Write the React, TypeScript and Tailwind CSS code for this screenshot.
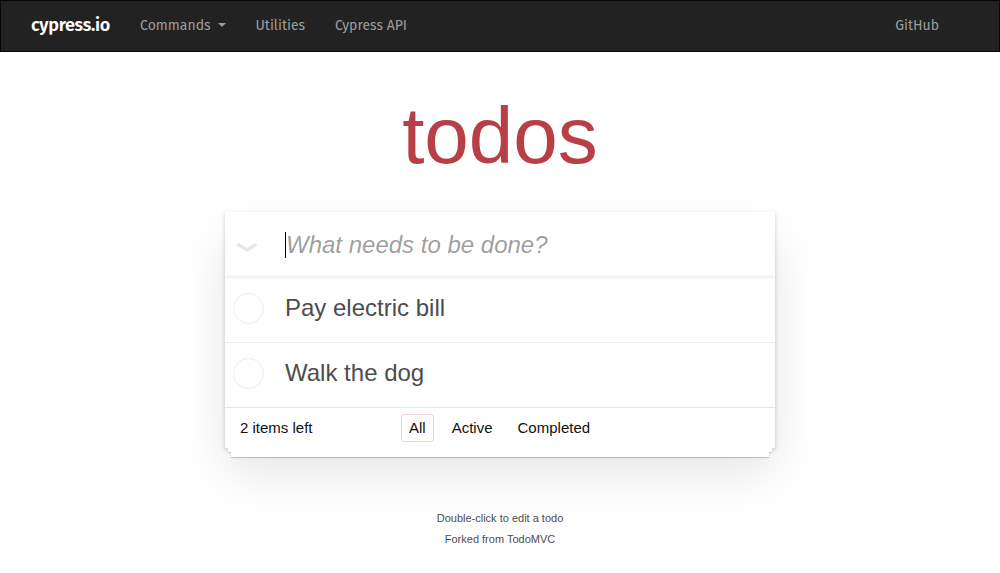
import React from "react";

type Todo = { id: number; title: string };

const todos: Todo[] = [
  { id: 1, title: "Pay electric bill" },
  { id: 2, title: "Walk the dog" },
];

function Navbar() {
  return (
    <nav className="h-[52px] bg-[#222] border border-[#080808] flex items-center pb-[2px] font-['Fira_Sans','Open_Sans',sans-serif]">
      <div className="flex items-center pl-[15px]">
        <span className="px-[15px] text-[18px] font-semibold text-white tracking-[-0.3px]">cypress.io</span>
        <span className="px-[15px] text-[14px] text-[#9d9d9d] flex items-center">
          Commands
          <span className="ml-[7px] w-0 h-0 border-l-[4px] border-r-[4px] border-t-[4px] border-l-transparent border-r-transparent border-t-[#9d9d9d]" />
        </span>
        <span className="px-[15px] text-[14px] text-[#9d9d9d]">Utilities</span>
        <span className="px-[15px] text-[14px] text-[#9d9d9d]">Cypress API</span>
      </div>
      <div className="ml-auto pr-[45px]">
        <span className="px-[15px] text-[14px] text-[#9d9d9d]">GitHub</span>
      </div>
    </nav>
  );
}

function TodoItem({ todo }: { todo: Todo }) {
  return (
    <li className="flex items-center h-[65px] pb-[4px] border-t border-[#ededed]">
      <div className="w-[60px] flex pl-[8px]">
        <span className="w-[31px] h-[31px] rounded-full border border-[#ededed]" />
      </div>
      <span className="text-[24px] text-[#4d4d4d] leading-none">{todo.title}</span>
    </li>
  );
}

export default function App() {
  return (
    <div className="min-h-screen bg-white font-['Liberation_Sans',Arial,sans-serif]">
      <Navbar />
      <div className="w-[550px] mx-auto">
        <h1 className="text-center text-[80px] leading-[80px] text-[#b83f45] pt-[44px] pb-[36px]">todos</h1>

        <section className="bg-white shadow-[0_2px_4px_rgba(0,0,0,0.2),0_25px_50px_rgba(0,0,0,0.1)]">
          <header className="flex items-center h-[65px] shadow-[inset_0_-2px_1px_rgba(0,0,0,0.03)]">
            <div className="w-[60px] flex pl-[12px]">
              <svg width="20" height="10" viewBox="0 0 20 10" className="mt-[6px]">
                <path d="M2 2 L10 7 L18 2" fill="none" stroke="#e6e6e6" strokeWidth="3.5" strokeLinecap="round" strokeLinejoin="round" />
              </svg>
            </div>
            <span className="w-px h-[26px] bg-black" />
            <span className="italic text-[24px] text-[rgba(0,0,0,0.4)] leading-none">What needs to be done?</span>
          </header>

          <ul>
            {todos.map((t) => (
              <TodoItem key={t.id} todo={t} />
            ))}
          </ul>

          <footer className="flex items-center h-[41px] border-t border-[#e6e6e6] px-[15px] text-[15px] text-[#111]">
            <span className="w-[161px]">2 items left</span>
            <div className="flex items-center gap-[10px]">
              <span className="px-[7px] py-[2px] border border-[rgba(175,47,47,0.2)] rounded-[3px]">All</span>
              <span className="px-[7px] py-[2px] border border-transparent">Active</span>
              <span className="px-[6px] py-[2px] border border-transparent">Completed</span>
            </div>
          </footer>
        </section>
        <div className="mx-[3px] h-[4px] bg-white shadow-[0_1px_1px_rgba(0,0,0,0.2)]" />
        <div className="mx-[6px] h-[5px] bg-white shadow-[0_1px_1px_rgba(0,0,0,0.2)]" />

        <footer className="mt-[51px] text-center text-[11px] text-[#4d4d4d] leading-[21px]">
          <p>Double-click to edit a todo</p>
          <p>Forked from TodoMVC</p>
        </footer>
      </div>
    </div>
  );
}
